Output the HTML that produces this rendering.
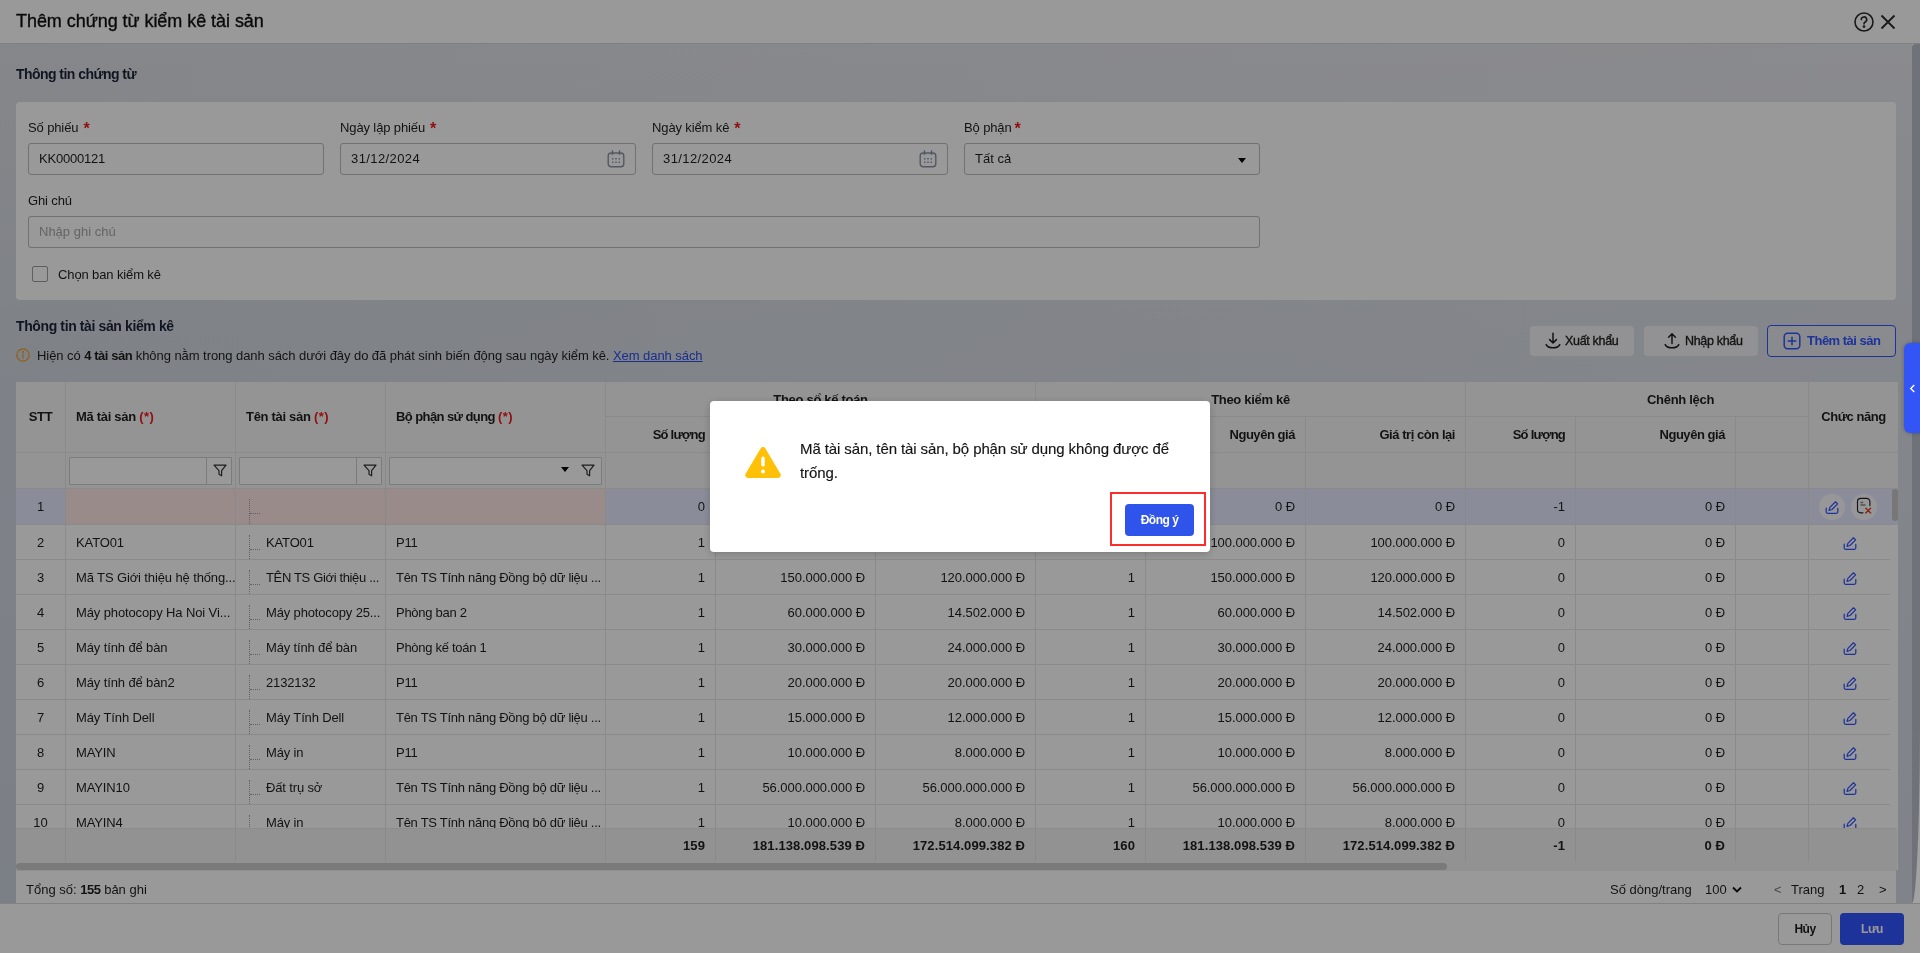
<!DOCTYPE html>
<html lang="vi">
<head>
<meta charset="utf-8">
<title>Thêm chứng từ kiểm kê tài sản</title>
<style>
*{box-sizing:border-box;margin:0;padding:0}
html,body{width:1920px;height:953px;overflow:hidden}
body{font-family:"Liberation Sans",sans-serif;font-size:13px;color:#1f1f1f;position:relative;background:#e4e6ec}
#root{position:absolute;left:0;top:0;width:1920px;height:953px;will-change:transform}
.abs{position:absolute}
b,.b{font-weight:bold;letter-spacing:-.45px}
.nw{white-space:nowrap}
/* header */
#hdr{position:absolute;left:0;top:0;width:1920px;height:44px;background:#fff;border-bottom:1px solid #d6d6d6}
#hdr .title{position:absolute;left:16px;top:0;line-height:42px;font-size:18px;color:#111;-webkit-text-stroke:.35px #111;letter-spacing:-.05px;white-space:nowrap}
#content{position:absolute;left:0;top:44px;width:1912px;height:859px;background:linear-gradient(90deg,rgba(40,60,90,.045),rgba(40,60,90,0) 100%),linear-gradient(180deg,#e7e8ed 0,#dce0e8 32%,#d5dbe5 100%)}
#pscroll{position:absolute;left:1912px;top:44px;width:8px;height:859px;background:#a2a2a2}
#pscroll i{position:absolute;left:0;top:0;width:8px;height:859px;background:#6f7278;border-radius:3px 0 0 0;border-bottom-right-radius:8px 185px}
#footer{position:absolute;left:0;top:903px;width:1920px;height:50px;background:#fff;border-top:1px solid #d9d9d9}
.sec{position:absolute;left:16px;font-size:14px;font-weight:bold;color:#1c2438;letter-spacing:-.55px;white-space:nowrap;line-height:20px}
#panel{position:absolute;left:16px;top:102px;width:1880px;height:198px;background:#fff;border-radius:4px}
.lbl{position:absolute;font-size:13px;line-height:16px;white-space:nowrap;color:#1f1f1f;letter-spacing:-.12px}
.req{color:#f21c1c;margin-left:5px;font-size:16px;line-height:10px;position:relative;top:2px;font-weight:bold}
.inp{position:absolute;height:32px;border:1px solid #bdbdbd;border-radius:3px;background:#fff;line-height:30px;padding-left:10px;font-size:13px;white-space:nowrap;color:#1f1f1f}
.inp.date{letter-spacing:.4px}
.ph{color:#a8a8a8}
.cal{position:absolute;right:10px;top:6px;width:18px;height:18px;fill:none;stroke:#8b92a5;stroke-width:1.4}
.caret{position:absolute;width:0;height:0;border-left:4px solid transparent;border-right:4px solid transparent;border-top:5px solid #111}
.chk{position:absolute;left:32px;top:266px;width:16px;height:16px;border:1px solid #9e9e9e;border-radius:2px;background:#fff}
.md{font-weight:normal!important;-webkit-text-stroke:.35px currentColor}
/* toolbar */
.btn{position:absolute;height:32px;border-radius:4px;font-size:13px;font-weight:bold;letter-spacing:-.5px;line-height:32px;white-space:nowrap;text-align:left}
.btn.gray{background:#f3f4f7;color:#1f1f1f;height:30px;line-height:30px;letter-spacing:-.32px;font-size:12.5px}
.btn.line{border:1px solid #3355ff;color:#3355ff;line-height:30px;background:rgba(255,255,255,.25)}
.btn svg{position:absolute;fill:none;stroke-width:1.5;stroke-linecap:round;stroke-linejoin:round}
/* grid */
#grid{position:absolute;left:16px;top:382px;width:1882px;height:488px;background:#fff;overflow:hidden}
table{border-collapse:separate;border-spacing:0;table-layout:fixed;width:1880px}
th,td{border-right:1px solid #e7e7e7;border-bottom:1px solid #e7e7e7;white-space:nowrap;overflow:hidden;padding:0 10px;font-size:13px;text-align:left;vertical-align:middle}
th{background:#f7f7f7;font-weight:bold;letter-spacing:-.45px;height:35px;color:#1f1f1f}
th.c,td.c{text-align:center;padding:0}
th[rowspan]{padding-bottom:1px}
th.r,td.r{text-align:right}
th em{font-style:normal;color:#f21c1c;letter-spacing:.5px}
thead tr:first-child th{letter-spacing:-.3px}
tr.h2 th{height:36px}
tr.flt th{height:36px;padding:0;position:relative}
tbody td{height:35px;background:#fff;color:#1f1f1f;letter-spacing:-.05px}
tbody tr.sel td{height:36px;background:#e7ebff}
tbody tr.sel td.err{background:#fee8e5}
td.tree{position:relative;padding-left:30px;letter-spacing:-.15px}
tbody td:nth-child(4){letter-spacing:-.28px}
tbody td:nth-child(2){letter-spacing:-.12px}
.tight{letter-spacing:-.35px}
td.tree .tv{position:absolute;left:13px;top:10px;bottom:0;border-left:1px dotted #a2a2a2}
td.tree .th{position:absolute;left:14px;top:24px;width:10px;border-top:1px dotted #a2a2a2}
.fbox{position:absolute;left:3px;top:4px;height:28px;border:1px solid #cdcdcd;border-radius:1px;background:#fff}
.fbox .div{position:absolute;right:24px;top:0;bottom:0;border-left:1px solid #cdcdcd}
.fbox svg{position:absolute;right:4px;top:6px;width:14px;height:14px;fill:none;stroke:#333;stroke-width:1.2;stroke-linejoin:round}
#sum{position:absolute;left:0;top:446px;width:1881px;overflow:hidden;height:34px;background:#f3f3f3;border-top:1px solid #e9e9e9}
#sum table td{height:33px;background:#f3f3f3;font-weight:bold;letter-spacing:.1px;border-bottom:none;border-right:1px solid #e7e7e7}
#hsb{position:absolute;left:0;top:480px;width:1881px;height:8px;background:#f3f3f3}
#hsb i{position:absolute;left:0;top:1px;width:1431px;height:7px;background:#cbcbcb;border-radius:4px}
#vsb{position:absolute;left:1874px;top:107px;width:8px;height:339px}
#vsb i{position:absolute;left:2px;top:0;width:6px;height:32px;background:#c6c6c6;border-radius:3px}
/* fixed col */
#fx{position:absolute;left:1792px;top:0;width:90px;height:446px;border-left:1px solid #e7e7e7;background:#fff}
#fx .h{height:71px;background:#f7f7f7;border-bottom:1px solid #e7e7e7;font-weight:bold;letter-spacing:-.45px;text-align:center;line-height:70px}
#fx .f{height:36px;background:#f7f7f7;border-bottom:1px solid #e7e7e7}
.fx-row{height:35px;position:relative;width:89px;background:#fff}
.fx-row:after{content:"";position:absolute;left:0;bottom:0;width:81px;border-bottom:1px solid #e7e7e7}
.fx-row.sel{height:36px;background:#e7ebff}
.circ{position:absolute;top:5px;width:26px;height:26px;border-radius:13px;background:rgba(255,255,255,.85)}
.circ svg{position:absolute;left:5px;top:6px}
.circ .ic-del{left:4px;top:3px}
.solo{position:absolute;left:33px;top:11px;width:16px;height:16px}
.ic-edit{fill:none;stroke:#3355ff;stroke-width:1.25;stroke-linejoin:round;stroke-linecap:round}
.ic-del{fill:none;stroke-width:1.15;stroke-linecap:round}
.ic-del .d1{stroke:#222}.ic-del .d2{stroke:#888;stroke-width:1.5}.ic-del .d3{stroke:#e0401f;stroke-width:1.4}
/* pagination */
#pg{position:absolute;left:16px;top:870px;width:1880px;height:33px;background:#fff;line-height:39px;font-size:13px;box-shadow:inset 0 1px 0 #f0f0f0}
#pg span{position:absolute;top:0;white-space:nowrap}
/* footer buttons */
.fbtn{position:absolute;top:9px;height:32px;border-radius:4px;font-weight:bold;letter-spacing:-.5px;text-align:center;line-height:30px;font-size:12px}
/* overlay + modal */
#ov{position:absolute;left:0;top:0;width:1920px;height:953px;background:rgba(0,0,0,.4)}
#tab{position:absolute;left:1904px;top:343px;width:16px;height:90px;background:#3355f5;border-radius:6px 0 0 6px;box-shadow:0 0 4px rgba(0,0,0,.3)}
#tab svg{position:absolute;left:5px;top:40.5px;width:7px;height:9px;fill:none;stroke:#fff;stroke-width:1.6}
#modal{position:absolute;left:710px;top:401px;width:500px;height:151px;background:#fff;border-radius:4px;box-shadow:0 2px 8px rgba(0,0,0,.2)}
#modal .msg{position:absolute;left:90px;top:36px;width:390px;font-size:15px;line-height:24px;color:#141414;letter-spacing:-.1px;-webkit-text-stroke:.15px #141414}
#modal .hl{position:absolute;left:400px;top:91px;width:96px;height:54px;border:2px solid #fb2d2d}
#modal .ok{position:absolute;left:415px;top:103px;width:69px;height:32px;background:#2f54eb;border-radius:4px;color:#fff;font-weight:bold;font-size:12px;letter-spacing:-.5px;text-align:center;line-height:32px}
</style>
</head>
<body>
<div id="root">
<div id="hdr">
  <div class="title">Thêm chứng từ kiểm kê tài sản</div>
  <svg class="abs" style="left:1853px;top:11px" width="22" height="22" viewBox="0 0 22 22" fill="none" stroke="#2b2b2b" stroke-width="1.6"><circle cx="11" cy="11" r="9"/><path d="M8.3 8.6a2.7 2.7 0 1 1 3.9 2.4c-.8.45-1.2.9-1.2 1.9" stroke-linecap="round"/><circle cx="11" cy="15.6" r=".6" fill="#2b2b2b"/></svg>
  <svg class="abs" style="left:1880px;top:14px" width="16" height="16" viewBox="0 0 16 16" fill="none" stroke="#2b2b2b" stroke-width="1.8"><path d="M1.5 1.5l13 13M14.5 1.5l-13 13"/></svg>
</div>
<div id="content"></div>

<div class="sec" style="top:64px">Thông tin chứng từ</div>
<div id="panel"></div>
<div class="lbl" style="left:28px;top:120px">Số phiếu<span class="req">*</span></div>
<div class="lbl" style="left:340px;top:120px">Ngày lập phiếu<span class="req">*</span></div>
<div class="lbl" style="left:652px;top:120px">Ngày kiểm kê<span class="req">*</span></div>
<div class="lbl" style="left:964px;top:120px">Bộ phận<span class="req" style="margin-left:3px">*</span></div>
<div class="inp" style="left:28px;top:143px;width:296px;letter-spacing:-.2px">KK0000121</div>
<div class="inp date" style="left:340px;top:143px;width:296px">31/12/2024<svg class="cal" viewBox="0 0 18 18"><rect x="1.2" y="3" width="15.6" height="13.8" rx="3"/><path d="M5.5 1v3.4M12.5 1v3.4" stroke-linecap="round"/><path d="M5 8.8h1.4M8.3 8.8h1.4M11.6 8.8H13M5 12.2h1.4M8.3 12.2h1.4M11.6 12.2H13" stroke-width="1.6"/></svg></div>
<div class="inp date" style="left:652px;top:143px;width:296px">31/12/2024<svg class="cal" viewBox="0 0 18 18"><rect x="1.2" y="3" width="15.6" height="13.8" rx="3"/><path d="M5.5 1v3.4M12.5 1v3.4" stroke-linecap="round"/><path d="M5 8.8h1.4M8.3 8.8h1.4M11.6 8.8H13M5 12.2h1.4M8.3 12.2h1.4M11.6 12.2H13" stroke-width="1.6"/></svg></div>
<div class="inp" style="left:964px;top:143px;width:296px">Tất cả<i class="caret" style="right:13px;top:14px;border-top-color:#000"></i></div>
<div class="lbl" style="left:28px;top:193px">Ghi chú</div>
<div class="inp" style="left:28px;top:216px;width:1232px"><span class="ph">Nhập ghi chú</span></div>
<div class="chk"></div>
<div class="lbl" style="left:58px;top:267px">Chọn ban kiểm kê</div>

<div class="sec" style="top:316px;letter-spacing:-.38px">Thông tin tài sản kiểm kê</div>
<svg class="abs" style="left:16px;top:348px" width="14" height="14" viewBox="0 0 14 14" fill="none" stroke="#f0a020" stroke-width="1.2"><circle cx="7" cy="7" r="6.2"/><path d="M7 6.2v4" stroke-linecap="round"/><circle cx="7" cy="4" r=".5" fill="#f0a020"/></svg>
<div class="lbl" style="left:37px;top:348px;letter-spacing:-.06px">Hiện có <b>4 tài sản</b> không nằm trong danh sách dưới đây do đã phát sinh biến động sau ngày kiểm kê. <span style="color:#2e4de6;text-decoration:underline">Xem danh sách</span></div>

<div class="btn gray md" style="left:1530px;top:326px;width:104px;padding-left:35px">Xuất khẩu<svg style="left:15px;top:6px" width="16" height="17" viewBox="0 0 16 17" stroke="#1f1f1f" stroke-width="1.25"><path d="M8 1.2v9.6M4.6 7.6L8 11l3.4-3.4M1.2 12.6c1 2.2 3.4 3.2 6.8 3.2s5.8-1 6.8-3.2"/></svg></div>
<div class="btn gray md" style="left:1644px;top:326px;width:114px;padding-left:41px">Nhập khẩu<svg style="left:20px;top:6px" width="16" height="17" viewBox="0 0 16 17" stroke="#1f1f1f" stroke-width="1.25"><path d="M8 11.4V1.8M4.6 5.2L8 1.8l3.4 3.4M1.2 12.6c1 2.2 3.4 3.2 6.8 3.2s5.8-1 6.8-3.2"/></svg></div>
<div class="btn line" style="left:1767px;top:325px;width:129px;padding-left:39px">Thêm tài sản<svg style="left:15px;top:6px" width="18" height="18" viewBox="0 0 18 18" stroke="#3355ff"><rect x="1.2" y="1.2" width="15.6" height="15.6" rx="3.5"/><path d="M9 5.2v7.6M5.2 9h7.6"/></svg></div>

<div id="grid">
<table>
<colgroup><col style="width:50px"><col style="width:170px"><col style="width:150px"><col style="width:220px"><col style="width:110px"><col style="width:160px"><col style="width:160px"><col style="width:110px"><col style="width:160px"><col style="width:160px"><col style="width:110px"><col style="width:160px"><col style="width:160px"></colgroup>
<thead>
<tr><th rowspan="2" class="c">STT</th><th rowspan="2">Mã tài sản <em>(*)</em></th><th rowspan="2">Tên tài sản <em>(*)</em></th><th rowspan="2" style="letter-spacing:-.58px">Bộ phận sử dụng <em>(*)</em></th><th colspan="3" class="c">Theo sổ kế toán</th><th colspan="3" class="c">Theo kiểm kê</th><th colspan="3" class="c">Chênh lệch</th></tr>
<tr class="h2"><th class="r" style="letter-spacing:-.75px">Số lượng</th><th class="r">Nguyên giá</th><th class="r">Giá trị còn lại</th><th class="r" style="letter-spacing:-.75px">Số lượng</th><th class="r">Nguyên giá</th><th class="r">Giá trị còn lại</th><th class="r" style="letter-spacing:-.75px">Số lượng</th><th class="r">Nguyên giá</th><th class="r">Giá trị còn lại</th></tr>
<tr class="flt"><th></th>
<th><div class="fbox" style="width:163px"><i class="div"></i><svg viewBox="0 0 14 14"><path d="M1 1.2h12L8.6 6.6v5.2l-2.6-1.6V6.6z"/></svg></div></th>
<th><div class="fbox" style="width:143px"><i class="div"></i><svg viewBox="0 0 14 14"><path d="M1 1.2h12L8.6 6.6v5.2l-2.6-1.6V6.6z"/></svg></div></th>
<th><div class="fbox" style="width:213px"><i class="caret" style="right:32px;top:9px;border-top-color:#000"></i><svg viewBox="0 0 14 14" style="right:6px"><path d="M1 1.2h12L8.6 6.6v5.2l-2.6-1.6V6.6z"/></svg></div></th>
<th></th><th></th><th></th><th></th><th></th><th></th><th></th><th></th><th></th></tr>
</thead>
<tbody>
<tr class="sel"><td class="c">1</td><td class="err"></td><td class="err tree"><i class="tv"></i><i class="th"></i><span class="tn"></span></td><td class="err"></td><td class="r">0</td><td class="r"></td><td class="r"></td><td class="r"></td><td class="r">0 Đ</td><td class="r">0 Đ</td><td class="r">-1</td><td class="r">0 Đ</td><td></td></tr>
<tr><td class="c">2</td><td>KATO01</td><td class="tree"><i class="tv"></i><i class="th"></i><span class="tn">KATO01</span></td><td>P11</td><td class="r">1</td><td class="r">100.000.000 Đ</td><td class="r">100.000.000 Đ</td><td class="r">1</td><td class="r">100.000.000 Đ</td><td class="r">100.000.000 Đ</td><td class="r">0</td><td class="r">0 Đ</td><td></td></tr>
<tr><td class="c">3</td><td>Mã TS Giới thiệu hệ thống...</td><td class="tree"><i class="tv"></i><i class="th"></i><span class="tn tight">TÊN TS Giới thiệu ...</span></td><td>Tên TS Tính năng Đồng bộ dữ liệu ...</td><td class="r">1</td><td class="r">150.000.000 Đ</td><td class="r">120.000.000 Đ</td><td class="r">1</td><td class="r">150.000.000 Đ</td><td class="r">120.000.000 Đ</td><td class="r">0</td><td class="r">0 Đ</td><td></td></tr>
<tr><td class="c">4</td><td>Máy photocopy Ha Noi Vi...</td><td class="tree"><i class="tv"></i><i class="th"></i><span class="tn">Máy photocopy 25...</span></td><td>Phòng ban 2</td><td class="r">1</td><td class="r">60.000.000 Đ</td><td class="r">14.502.000 Đ</td><td class="r">1</td><td class="r">60.000.000 Đ</td><td class="r">14.502.000 Đ</td><td class="r">0</td><td class="r">0 Đ</td><td></td></tr>
<tr><td class="c">5</td><td>Máy tính để bàn</td><td class="tree"><i class="tv"></i><i class="th"></i><span class="tn">Máy tính để bàn</span></td><td>Phòng kế toán 1</td><td class="r">1</td><td class="r">30.000.000 Đ</td><td class="r">24.000.000 Đ</td><td class="r">1</td><td class="r">30.000.000 Đ</td><td class="r">24.000.000 Đ</td><td class="r">0</td><td class="r">0 Đ</td><td></td></tr>
<tr><td class="c">6</td><td>Máy tính để bàn2</td><td class="tree"><i class="tv"></i><i class="th"></i><span class="tn">2132132</span></td><td>P11</td><td class="r">1</td><td class="r">20.000.000 Đ</td><td class="r">20.000.000 Đ</td><td class="r">1</td><td class="r">20.000.000 Đ</td><td class="r">20.000.000 Đ</td><td class="r">0</td><td class="r">0 Đ</td><td></td></tr>
<tr><td class="c">7</td><td>Máy Tính Dell</td><td class="tree"><i class="tv"></i><i class="th"></i><span class="tn">Máy Tính Dell</span></td><td>Tên TS Tính năng Đồng bộ dữ liệu ...</td><td class="r">1</td><td class="r">15.000.000 Đ</td><td class="r">12.000.000 Đ</td><td class="r">1</td><td class="r">15.000.000 Đ</td><td class="r">12.000.000 Đ</td><td class="r">0</td><td class="r">0 Đ</td><td></td></tr>
<tr><td class="c">8</td><td>MAYIN</td><td class="tree"><i class="tv"></i><i class="th"></i><span class="tn">Máy in</span></td><td>P11</td><td class="r">1</td><td class="r">10.000.000 Đ</td><td class="r">8.000.000 Đ</td><td class="r">1</td><td class="r">10.000.000 Đ</td><td class="r">8.000.000 Đ</td><td class="r">0</td><td class="r">0 Đ</td><td></td></tr>
<tr><td class="c">9</td><td>MAYIN10</td><td class="tree"><i class="tv"></i><i class="th"></i><span class="tn">Đất trụ sở</span></td><td>Tên TS Tính năng Đồng bộ dữ liệu ...</td><td class="r">1</td><td class="r">56.000.000.000 Đ</td><td class="r">56.000.000.000 Đ</td><td class="r">1</td><td class="r">56.000.000.000 Đ</td><td class="r">56.000.000.000 Đ</td><td class="r">0</td><td class="r">0 Đ</td><td></td></tr>
<tr><td class="c">10</td><td>MAYIN4</td><td class="tree"><i class="tv"></i><i class="th"></i><span class="tn">Máy in</span></td><td>Tên TS Tính năng Đồng bộ dữ liệu ...</td><td class="r">1</td><td class="r">10.000.000 Đ</td><td class="r">8.000.000 Đ</td><td class="r">1</td><td class="r">10.000.000 Đ</td><td class="r">8.000.000 Đ</td><td class="r">0</td><td class="r">0 Đ</td><td></td></tr>
</tbody>
</table>
<div id="fx">
<div class="h">Chức năng</div>
<div class="f"></div>
<div class="fx-row sel"><span class="circ" style="left:10px"><svg class="ic-edit" viewBox="0 0 16 16" width="16" height="16"><path d="M2.2 8.2v3.6a1.6 1.6 0 0 0 1.6 1.6h8.4a1.6 1.6 0 0 0 1.6-1.6V8.4" /><path d="M5 10.4l.9-3 5.6-5.6 2.1 2.1L8 9.5z"/></svg></span><span class="circ" style="left:42px"><svg class="ic-del" viewBox="0 0 18 18" width="18" height="18"><path class="d1" d="M8 15.8H5.7a3.2 3.2 0 0 1-3.2-3.2v-8a3.2 3.2 0 0 1 3.2-3.2h6a3.2 3.2 0 0 1 3.2 3.2V8.6"/><path class="d2" d="M6 5.6h1.600M6 8h4"/><path class="d3" d="M10.8 11.2l4.8 4.8M15.6 11.2l-4.8 4.8"/></svg></span></div>
<div class="fx-row"><span class="solo"><svg class="ic-edit" viewBox="0 0 16 16" width="16" height="16"><path d="M2.2 8.2v3.6a1.6 1.6 0 0 0 1.6 1.6h8.4a1.6 1.6 0 0 0 1.6-1.6V8.4" /><path d="M5 10.4l.9-3 5.6-5.6 2.1 2.1L8 9.5z"/></svg></span></div>
<div class="fx-row"><span class="solo"><svg class="ic-edit" viewBox="0 0 16 16" width="16" height="16"><path d="M2.2 8.2v3.6a1.6 1.6 0 0 0 1.6 1.6h8.4a1.6 1.6 0 0 0 1.6-1.6V8.4" /><path d="M5 10.4l.9-3 5.6-5.6 2.1 2.1L8 9.5z"/></svg></span></div>
<div class="fx-row"><span class="solo"><svg class="ic-edit" viewBox="0 0 16 16" width="16" height="16"><path d="M2.2 8.2v3.6a1.6 1.6 0 0 0 1.6 1.6h8.4a1.6 1.6 0 0 0 1.6-1.6V8.4" /><path d="M5 10.4l.9-3 5.6-5.6 2.1 2.1L8 9.5z"/></svg></span></div>
<div class="fx-row"><span class="solo"><svg class="ic-edit" viewBox="0 0 16 16" width="16" height="16"><path d="M2.2 8.2v3.6a1.6 1.6 0 0 0 1.6 1.6h8.4a1.6 1.6 0 0 0 1.6-1.6V8.4" /><path d="M5 10.4l.9-3 5.6-5.6 2.1 2.1L8 9.5z"/></svg></span></div>
<div class="fx-row"><span class="solo"><svg class="ic-edit" viewBox="0 0 16 16" width="16" height="16"><path d="M2.2 8.2v3.6a1.6 1.6 0 0 0 1.6 1.6h8.4a1.6 1.6 0 0 0 1.6-1.6V8.4" /><path d="M5 10.4l.9-3 5.6-5.6 2.1 2.1L8 9.5z"/></svg></span></div>
<div class="fx-row"><span class="solo"><svg class="ic-edit" viewBox="0 0 16 16" width="16" height="16"><path d="M2.2 8.2v3.6a1.6 1.6 0 0 0 1.6 1.6h8.4a1.6 1.6 0 0 0 1.6-1.6V8.4" /><path d="M5 10.4l.9-3 5.6-5.6 2.1 2.1L8 9.5z"/></svg></span></div>
<div class="fx-row"><span class="solo"><svg class="ic-edit" viewBox="0 0 16 16" width="16" height="16"><path d="M2.2 8.2v3.6a1.6 1.6 0 0 0 1.6 1.6h8.4a1.6 1.6 0 0 0 1.6-1.6V8.4" /><path d="M5 10.4l.9-3 5.6-5.6 2.1 2.1L8 9.5z"/></svg></span></div>
<div class="fx-row"><span class="solo"><svg class="ic-edit" viewBox="0 0 16 16" width="16" height="16"><path d="M2.2 8.2v3.6a1.6 1.6 0 0 0 1.6 1.6h8.4a1.6 1.6 0 0 0 1.6-1.6V8.4" /><path d="M5 10.4l.9-3 5.6-5.6 2.1 2.1L8 9.5z"/></svg></span></div>
<div class="fx-row"><span class="solo"><svg class="ic-edit" viewBox="0 0 16 16" width="16" height="16"><path d="M2.2 8.2v3.6a1.6 1.6 0 0 0 1.6 1.6h8.4a1.6 1.6 0 0 0 1.6-1.6V8.4" /><path d="M5 10.4l.9-3 5.6-5.6 2.1 2.1L8 9.5z"/></svg></span></div>
</div>
<div id="vsb"><i></i></div>
<div id="sum"><table><colgroup><col style="width:50px"><col style="width:170px"><col style="width:150px"><col style="width:220px"><col style="width:110px"><col style="width:160px"><col style="width:160px"><col style="width:110px"><col style="width:160px"><col style="width:160px"><col style="width:110px"><col style="width:160px"><col style="width:160px"></colgroup><tr><td></td><td></td><td></td><td></td><td class="r">159</td><td class="r">181.138.098.539 Đ</td><td class="r">172.514.099.382 Đ</td><td class="r">160</td><td class="r">181.138.098.539 Đ</td><td class="r">172.514.099.382 Đ</td><td class="r">-1</td><td class="r">0 Đ</td><td></td></tr></table><i style="position:absolute;left:1792px;top:0;width:90px;height:34px;background:#f3f3f3;border-left:1px solid #e7e7e7"></i></div>
<div id="hsb"><i></i></div>
</div>

<div id="pg">
<span style="left:10px">Tổng số: <b>155</b> bản ghi</span>
<span style="left:1594px">Số dòng/trang</span>
<span style="left:1689px">100</span>
<svg class="abs" style="left:1716px;top:16px" width="10" height="8" viewBox="0 0 10 8" fill="none" stroke="#111" stroke-width="1.8"><path d="M1 1.5l4 4 4-4"/></svg>
<span style="left:1758px;color:#777">&lt;</span>
<span style="left:1775px">Trang</span>
<span style="left:1823px"><b>1</b></span>
<span style="left:1841px">2</span>
<span style="left:1863px">&gt;</span>
</div>

<div id="footer">
<div class="fbtn" style="left:1778px;width:54px;border:1px solid #c9c9c9;background:#fff;color:#1f1f1f">Hủy</div>
<div class="fbtn" style="left:1840px;width:64px;background:#3355ff;color:#fff;line-height:32px">Lưu</div>
</div>

<div id="ov"></div>
<div id="pscroll"><i></i></div>
<div id="tab"><svg viewBox="0 0 8 10"><path d="M6 1L2 5l4 4"/></svg></div>
<div id="modal">
<svg class="abs" style="left:34px;top:45px" width="38" height="33" viewBox="0 0 38 33"><path d="M16.6 2.4a2.8 2.8 0 0 1 4.8 0l15 25.4a2.8 2.8 0 0 1-2.4 4.2H4a2.8 2.8 0 0 1-2.4-4.2z" fill="#ffc107"/><rect x="17.3" y="10.6" width="3.4" height="10" rx="1.7" fill="#fff"/><circle cx="19" cy="25.6" r="2" fill="#fff"/></svg>
<div class="msg">Mã tài sản, tên tài sản, bộ phận sử dụng không được để trống.</div>
<div class="hl"></div>
<div class="ok">Đồng ý</div>
</div>
</div>
</body>
</html>
